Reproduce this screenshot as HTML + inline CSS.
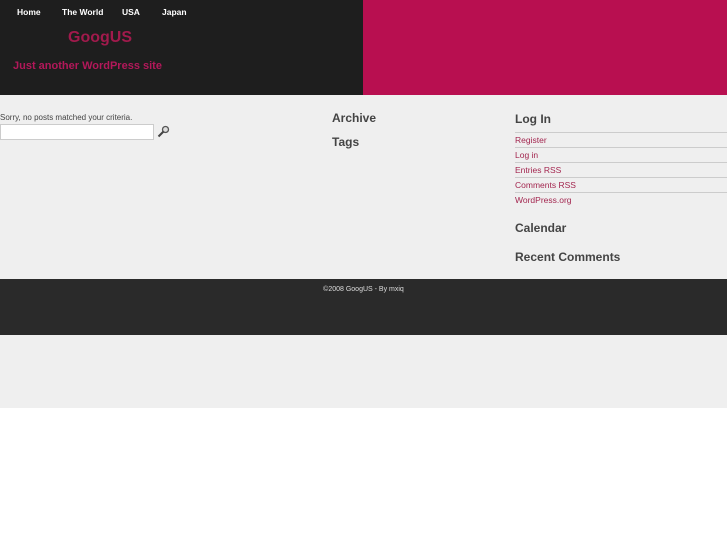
<!DOCTYPE html>
<html><head><style>
body{margin:0;width:727px;height:545px;background:#fff;font-family:"Liberation Sans",sans-serif;position:relative;overflow:hidden}
.a{position:absolute}
.nav{font-size:8.5px;font-weight:bold;color:#fff;top:7px}
h3{margin:0;font-size:12px;font-weight:bold;color:#444;position:absolute}
.li{position:absolute;left:515px;width:212px;border-top:1px solid #ccc;font-size:8.5px;color:#a3264f;height:14px;line-height:14px}
</style></head><body>
<div class="a" style="left:0;top:0;width:363px;height:95px;background:#1e1e1e"></div>
<div class="a" style="left:363px;top:0;width:364px;height:95px;background:#b80f50"></div>
<div class="a nav" style="left:17px">Home</div>
<div class="a nav" style="left:62px">The World</div>
<div class="a nav" style="left:122px">USA</div>
<div class="a nav" style="left:162px">Japan</div>
<div class="a" style="left:68px;top:29px;font-size:16px;font-weight:bold;color:#a11a4c">GoogUS</div>
<div class="a" style="left:13px;top:60px;font-size:11px;font-weight:bold;color:#b3185a">Just another WordPress site</div>
<div class="a" style="left:0;top:95px;width:727px;height:184px;background:#efefef"></div>
<div class="a" style="left:0;top:113px;font-size:8px;color:#444">Sorry, no posts matched your criteria.</div>
<div class="a" style="left:0;top:124px;width:152px;height:14px;background:#fff;border:1px solid #ccc"></div>
<svg class="a" style="left:157px;top:125px" width="13" height="13" viewBox="0 0 13 13"><circle cx="8.5" cy="4.5" r="3" fill="#ddd" stroke="#555" stroke-width="1.3"/><path d="M6.5 6.5 L1.5 11.5" stroke="#444" stroke-width="2"/></svg>
<h3 style="left:332px;top:111px">Archive</h3>
<h3 style="left:332px;top:135px">Tags</h3>
<h3 style="left:515px;top:112px">Log In</h3>
<div class="li" style="top:132px">Register</div>
<div class="li" style="top:147px">Log in</div>
<div class="li" style="top:162px">Entries RSS</div>
<div class="li" style="top:177px">Comments RSS</div>
<div class="li" style="top:192px">WordPress.org</div>
<h3 style="left:515px;top:221px">Calendar</h3>
<h3 style="left:515px;top:250px">Recent Comments</h3>
<div class="a" style="left:0;top:279px;width:727px;height:56px;background:#2a2a2a"></div>
<div class="a" style="left:0;top:286px;width:727px;text-align:center;font-size:7px;color:#ddd">©2008 GoogUS - By mxiq</div>
<div class="a" style="left:0;top:335px;width:727px;height:73px;background:#efefef"></div>
</body></html>
